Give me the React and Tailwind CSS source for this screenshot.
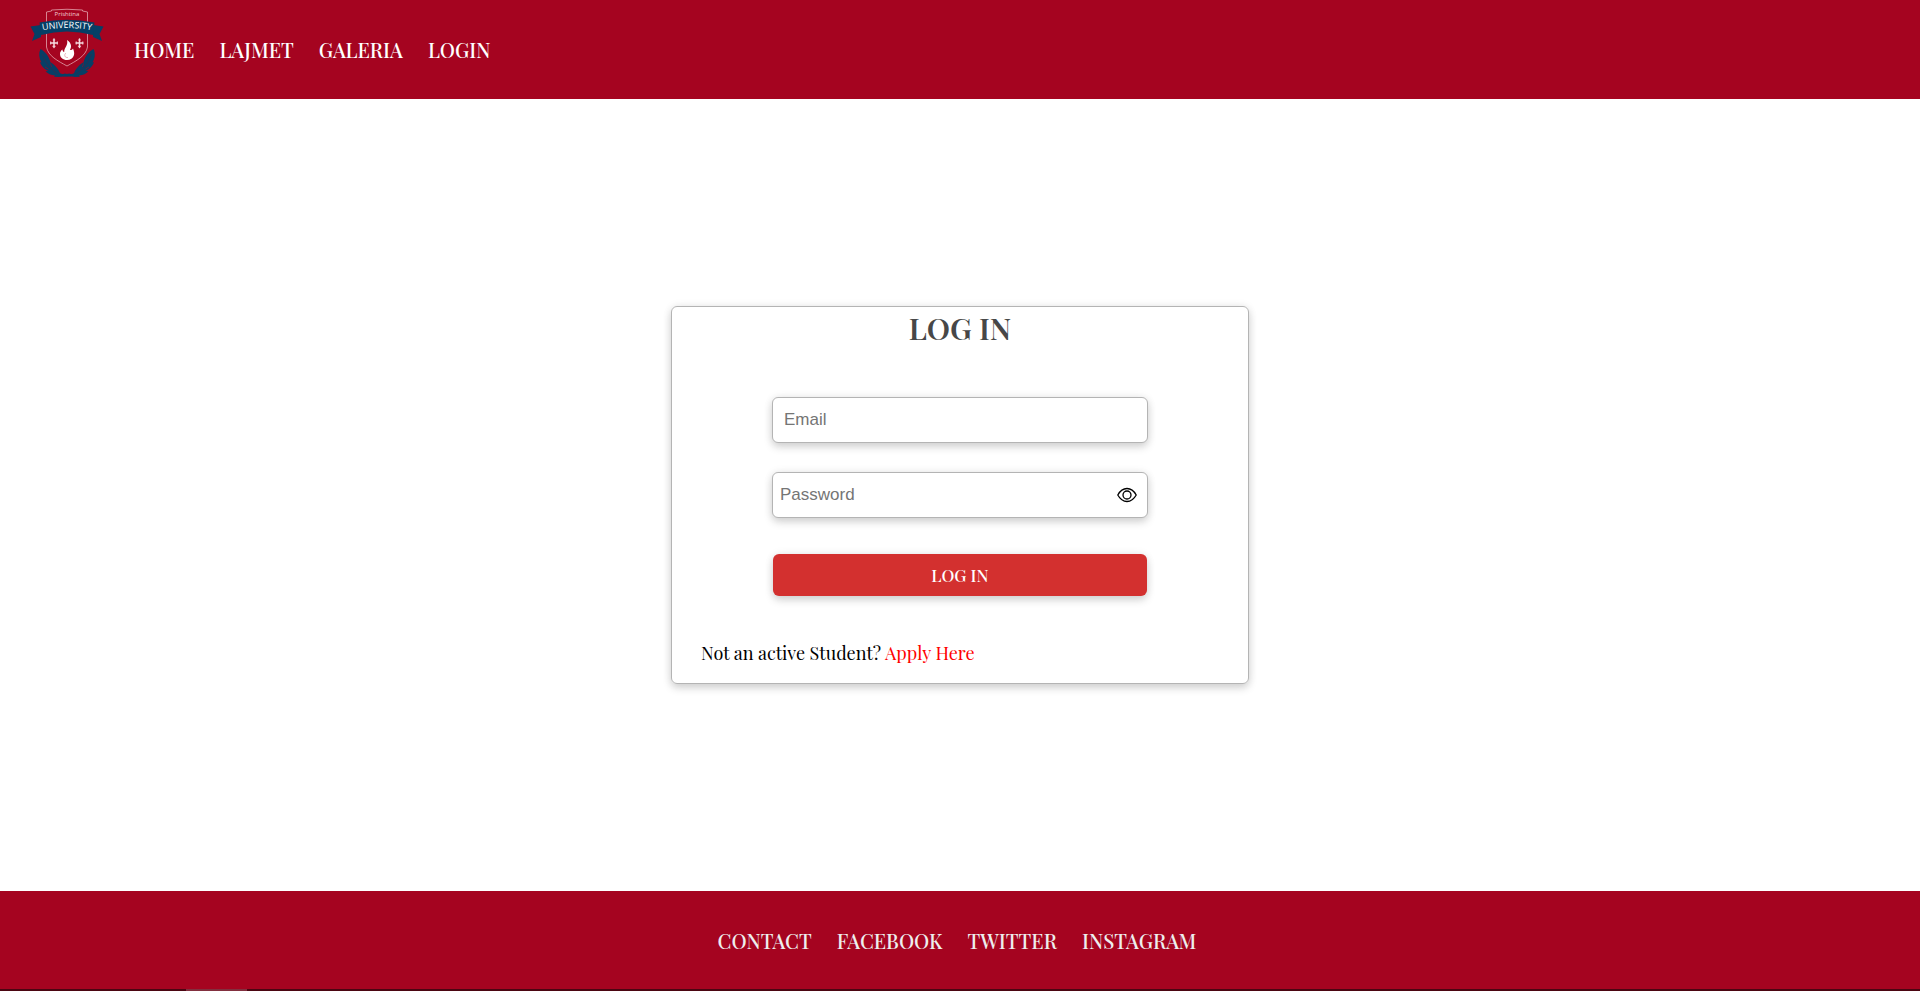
import { useState } from "react";

const mainLinks = ["HOME", "LAJMET", "GALERIA", "LOGIN"];
const footerLinks = ["CONTACT", "FACEBOOK", "TWITTER", "INSTAGRAM"];

const serif = "font-['Playfair_Display','Liberation_Serif',serif]";
const softShadow = "shadow-[0_4px_8px_rgba(0,0,0,0.16),0_0_10px_rgba(0,0,0,0.07)]";

function Feather() {
  return (
    <>
      <path
        d="M40.500 49 C45 51.500 49 56 50.500 62.500 L49.500 62 C54 64 58 68 60 73.200 C63 74.600 66 74 69.500 73.500 L73 75.500 C69 77 62 76.300 59 77 L54 76.800 L55 75.500 C51 75.500 47.500 73.500 45.500 71.300 L48.500 71 C44 69 40.800 65.500 40 62 L41.500 62.500 C38.800 58 38.500 53 40.500 49 Z"
        fill="#063f66"
      />
      <path d="M42.500 54 C45 62 50 69 58 74" fill="none" stroke="#3d2748" strokeWidth="0.6" />
      <path d="M45 67 L48.500 69 M50.500 63.500 L51.500 67" stroke="#a50420" strokeWidth="0.6" />
    </>
  );
}

function Fleur() {
  return (
    <g fill="none" stroke="#f6dde1" strokeWidth="1.3" strokeLinecap="round">
      <path d="M0 -4 V4.500 M-3.300 0 H3.300" strokeWidth="1.5" />
      <path d="M-3.300 -1.200 V1.200 M3.300 -1.200 V1.200 M-1.200 3.300 H1.200 M-0.800 -3 H0.800" strokeWidth="0.9" />
    </g>
  );
}

function UniversityLogo() {
  return (
    <svg viewBox="30 8 74 70" className="h-[70px] w-[74px]" role="img" aria-label="Prishtina University">
      <Feather />
      <g transform="translate(134 0) scale(-1 1)">
        <Feather />
      </g>
      <path
        d="M46.500 20 V12 L51.500 11 V10 Q67 8.500 82.500 10 V11 L87.500 12 V47 C86 56 76 61 67 66 C58 61 48 56 46.500 47 Z"
        fill="#a50420"
        stroke="#dc929e"
        strokeWidth="0.9"
      />
      <path d="M30.500 26.500 L41 25 V37 L32 41 L34.500 34 Z" fill="#063f66" />
      <path d="M103.500 26.500 L93 25 V37 L102 41 L99.500 34 Z" fill="#063f66" />
      <path d="M39.500 22.500 Q67 17 94.500 22.500 L93 35 Q67 28 41 35 Z" fill="#063f66" />
      <path id="ribbon-line" d="M39 31 Q67 25 95 31" fill="none" />
      <text
        textAnchor="middle"
        fill="#ffffff"
        className="font-['Open_Sans',sans-serif] text-[9px] font-medium"
      >
        <textPath href="#ribbon-line" startOffset="50%">
          UNIVERSITY
        </textPath>
      </text>
      <text
        x="67"
        y="16"
        textAnchor="middle"
        fill="#f3ccd2"
        className="font-['Open_Sans',sans-serif] text-[6px]"
      >
        Prishtina
      </text>
      <g transform="translate(54 43)">
        <Fleur />
      </g>
      <g transform="translate(79.500 43)">
        <Fleur />
      </g>
      <path
        d="M67 40 C72 43.500 71.500 47 70 50 C71.500 50 72.500 49.500 73 48.500 C74 51 74.500 53 74 55 C73 58.500 70.500 60 67 60 C63 60 60 57.500 60 54 C60 52 61 50.500 62.500 49.500 C62.500 51 63.200 52 64.200 52 C64 47.500 68.500 45.500 67 40 Z"
        fill="#ffffff"
      />
      <path d="M66 53 C63.500 55 65 58 68 57.500" fill="none" stroke="#dc929e" strokeWidth="0.7" />
    </svg>
  );
}

function EyeIcon() {
  return (
    <svg viewBox="0 0 20 16" className="h-4 w-5" fill="none" stroke="#000000" strokeWidth="1.3" aria-hidden="true">
      <path d="M0.800 8 C3 4 6 1.500 10 1.500 C14 1.500 17 4 19.200 8 C17 12 14 14.500 10 14.500 C6 14.500 3 12 0.800 8 Z" />
      <circle cx="10" cy="8" r="4" />
    </svg>
  );
}

export default function App() {
  const [visible, setVisible] = useState(false);

  return (
    <div className={`flex min-h-screen flex-col bg-white text-black ${serif}`}>
      <header className="flex items-start bg-[#a50420] px-[30px] pt-2 pb-[21px]">
        <a href="#home" aria-label="Prishtina University">
          <UniversityLogo />
        </a>
        <nav className="ml-[30px] flex gap-[25px] pt-[27px]">
          {mainLinks.map((label) => (
            <a key={label} href={`#${label.toLowerCase()}`} className="text-xl leading-[30px] font-medium text-white">
              {label}
            </a>
          ))}
        </nav>
      </header>

      <main className="flex grow items-center justify-center px-4">
        <form
          className={`w-full max-w-[578px] rounded-md border border-[#b4b4b4] px-[29px] pt-[3px] pb-[15px] ${softShadow}`}
          onSubmit={(event) => event.preventDefault()}
        >
          <h1 className="text-center text-[30px] leading-9 font-semibold text-[#474747]">LOG IN</h1>
          <div className="mx-auto mt-[51px] flex w-full max-w-[376px] flex-col">
            <input
              type="email"
              aria-label="Email"
              placeholder="Email"
              className={`h-[46px] w-full rounded-md border border-[#b4b4b4] bg-white px-[11px] font-['Liberation_Sans',sans-serif] text-[17px] outline-none placeholder:text-[#757575] ${softShadow}`}
            />
            <div
              className={`mt-[29px] flex h-[46px] items-center rounded-md border border-[#b4b4b4] bg-white pr-2.5 pl-[7px] ${softShadow}`}
            >
              <input
                type={visible ? "text" : "password"}
                aria-label="Password"
                placeholder="Password"
                className="h-full min-w-0 grow bg-transparent font-['Liberation_Sans',sans-serif] text-[17px] outline-none placeholder:text-[#757575]"
              />
              <button
                type="button"
                aria-label="Show password"
                aria-pressed={visible}
                onClick={() => setVisible(!visible)}
              >
                <EyeIcon />
              </button>
            </div>
            <button
              type="submit"
              className={`mx-px mt-9 h-[42px] rounded-md bg-[#d3302f] pt-px text-[17px] font-medium text-white ${softShadow}`}
            >
              LOG IN
            </button>
          </div>
          <p className="mt-[42px] text-lg leading-[30px]">
            Not an active Student?{" "}
            <a href="#apply" className="text-[#ff0000]">
              Apply Here
            </a>
          </p>
        </form>
      </main>

      <footer className="bg-[#a50420]">
        <nav className="flex flex-wrap justify-center gap-x-[25px] pt-[35px] pr-1.5 pb-[33px]">
          {footerLinks.map((label) => (
            <a key={label} href={`#${label.toLowerCase()}`} className="text-xl leading-[30px] font-medium text-[#eeeeee]">
              {label}
            </a>
          ))}
        </nav>
        <div className="flex h-0.5 bg-[#4b0612]">
          <div className="ml-[186px] w-[61px] bg-[#82303f]" />
        </div>
      </footer>
    </div>
  );
}
